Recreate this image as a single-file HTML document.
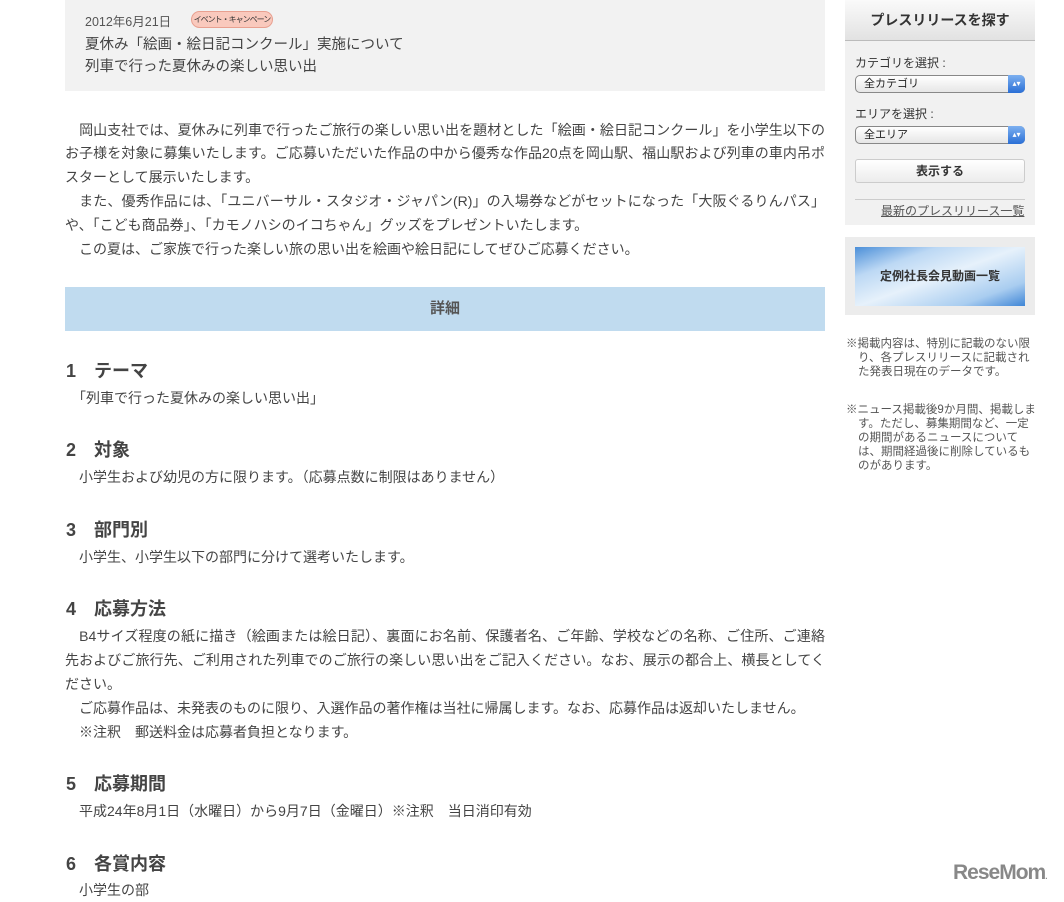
<!DOCTYPE html>
<html><head><meta charset="utf-8"><style>
*{margin:0;padding:0;box-sizing:border-box}
body{width:1064px;height:898px;background:#fff;font-family:"Liberation Sans","Noto Sans CJK JP",sans-serif;color:#444;position:relative;overflow:hidden}
.a{position:absolute}
.top{left:65px;top:0;width:760px;height:91px;background:#f2f2f2}
.ln{position:absolute;left:65px;width:760px;font-size:14px;line-height:24px;white-space:nowrap}
.j{text-align:justify;text-align-last:justify}
.h{position:absolute;left:66px;font-size:18px;font-weight:bold;color:#444;line-height:24px}
.side{left:845px;width:190px}
.sel{position:absolute;left:855px;width:170px;height:18px;border:1px solid #888;border-radius:5px;background:linear-gradient(#fff,#e6e6e6);font-size:11px;line-height:16px;padding-left:8px;color:#222}
.sel i{position:absolute;right:-1px;top:-1px;width:17px;height:18px;border-radius:0 5px 5px 0;background:linear-gradient(#7db0f0,#2a6fd6);color:#fff;font-style:normal;font-size:8px;text-align:center;line-height:17px}
.note{position:absolute;left:846px;width:192px;font-size:11.5px;line-height:14px;color:#555;padding-left:12px;text-indent:-12px}
</style></head><body>
<div class="a top"></div>
<div class="a" style="left:85px;top:11px;font-size:12.5px;color:#555">2012年6月21日</div>
<div class="a" style="left:191px;top:11px;width:82px;height:17px;border-radius:9px;background:#f9c9bd;border:1px solid #e8a090;font-size:8px;line-height:15px;text-align:center;color:#333;letter-spacing:-1px;white-space:nowrap;overflow:hidden">イベント・キャンペーン</div>
<div class="a" style="left:85px;top:34px;font-size:14.5px;line-height:22px;color:#444">夏休み「絵画・絵日記コンクール」実施について<br>列車で行った夏休みの楽しい思い出</div>

<div class="ln j" style="top:118px">　岡山支社では、夏休みに列車で行ったご旅行の楽しい思い出を題材とした「絵画・絵日記コンクール」を小学生以下の</div>
<div class="ln j" style="top:141px">お子様を対象に募集いたします。ご応募いただいた作品の中から優秀な作品20点を岡山駅、福山駅および列車の車内吊ポ</div>
<div class="ln" style="top:165px">スターとして展示いたします。</div>
<div class="ln j" style="top:189px">　また、優秀作品には、「ユニバーサル・スタジオ・ジャパン(R)」の入場券などがセットになった「大阪ぐるりんパス」</div>
<div class="ln" style="top:213px">や、「こども商品券」、「カモノハシのイコちゃん」グッズをプレゼントいたします。</div>
<div class="ln" style="top:237px">　この夏は、ご家族で行った楽しい旅の思い出を絵画や絵日記にしてぜひご応募ください。</div>

<div class="a" style="left:65px;top:287px;width:760px;height:44px;background:#c0dbef;text-align:center;font-size:15px;font-weight:bold;line-height:44px;color:#555">詳細</div>

<div class="h" style="top:359px">1　テーマ</div>
<div class="ln" style="top:386px">　「列車で行った夏休みの楽しい思い出」</div>
<div class="h" style="top:438px">2　対象</div>
<div class="ln" style="top:465px">　小学生および幼児の方に限ります。（応募点数に制限はありません）</div>
<div class="h" style="top:518px">3　部門別</div>
<div class="ln" style="top:545px">　小学生、小学生以下の部門に分けて選考いたします。</div>
<div class="h" style="top:597px">4　応募方法</div>
<div class="ln j" style="top:624px">　B4サイズ程度の紙に描き（絵画または絵日記）、裏面にお名前、保護者名、ご年齢、学校などの名称、ご住所、ご連絡</div>
<div class="ln j" style="top:648px">先およびご旅行先、ご利用された列車でのご旅行の楽しい思い出をご記入ください。なお、展示の都合上、横長としてく</div>
<div class="ln" style="top:672px">ださい。</div>
<div class="ln" style="top:696px">　ご応募作品は、未発表のものに限り、入選作品の著作権は当社に帰属します。なお、応募作品は返却いたしません。</div>
<div class="ln" style="top:720px">　※注釈　郵送料金は応募者負担となります。</div>
<div class="h" style="top:772px">5　応募期間</div>
<div class="ln" style="top:799px">　平成24年8月1日（水曜日）から9月7日（金曜日）※注釈　当日消印有効</div>
<div class="h" style="top:852px">6　各賞内容</div>
<div class="ln" style="top:878px">　小学生の部</div>

<div class="a side" style="top:0;height:225px;background:#f1f1f1"></div>
<div class="a side" style="top:0;height:41px;background:linear-gradient(#fafafa,#e2e2e2);border-bottom:1px solid #bbb;text-align:center;font-size:14px;font-weight:bold;line-height:40px;color:#333">プレスリリースを探す</div>
<div class="a" style="left:855px;top:54px;font-size:12px;color:#333">カテゴリを選択 :</div>
<div class="sel" style="top:75px">全カテゴリ<i>▴▾</i></div>
<div class="a" style="left:855px;top:105px;font-size:12px;color:#333">エリアを選択 :</div>
<div class="sel" style="top:126px">全エリア<i>▴▾</i></div>
<div class="a" style="left:855px;top:159px;width:170px;height:24px;border:1px solid #ccc;border-radius:3px;background:linear-gradient(#fff,#ececec);text-align:center;font-size:12px;font-weight:bold;line-height:22px;color:#333">表示する</div>
<div class="a" style="left:855px;top:199px;width:170px;border-top:1px solid #ccc"></div>
<div class="a" style="left:881px;top:202px;font-size:12px;color:#555;text-decoration:underline">最新のプレスリリース一覧</div>
<div class="a side" style="top:237px;height:78px;background:#ececec"></div>
<div class="a" style="left:855px;top:247px;width:170px;height:59px;background:linear-gradient(160deg,#4b8fd8 0%,#bcd8f4 25%,#e6f1fb 50%,#a9cdf0 80%,#3f86d6 100%);text-align:center;font-size:12px;font-weight:bold;line-height:59px;color:#333">定例社長会見動画一覧</div>
<div class="note" style="top:337px">※掲載内容は、特別に記載のない限り、各プレスリリースに記載された発表日現在のデータです。</div>
<div class="note" style="top:403px">※ニュース掲載後9か月間、掲載します。ただし、募集期間など、一定の期間があるニュースについては、期間経過後に削除しているものがあります。</div>
<div class="a" style="left:953px;top:861px;font-size:21px;font-weight:bold;color:#888;letter-spacing:-1px">ReseMom<span style="font-size:8px">.</span></div>
</body></html>
